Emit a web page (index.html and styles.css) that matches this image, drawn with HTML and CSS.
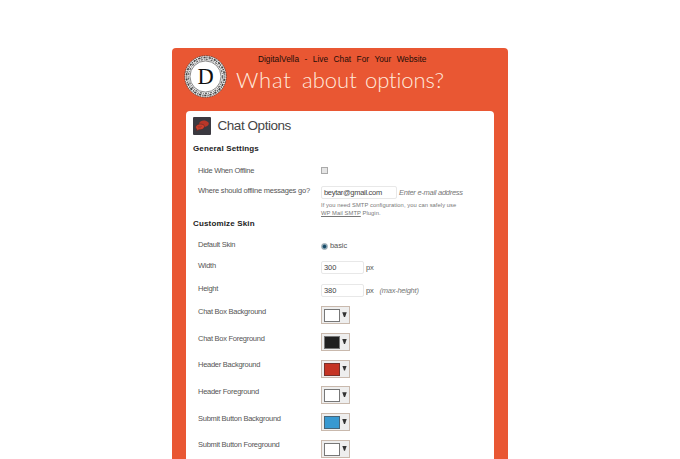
FILE: index.html
```html
<!DOCTYPE html>
<html lang="en">
<head>
<meta charset="utf-8">
<title>DigitalVella - Live Chat For Your Website</title>
<link rel="stylesheet" href="styles.css">
</head>
<body>
<main class="panel">
  <header class="banner">
    <svg class="logo" viewBox="0 0 44 44" aria-hidden="true">
      <circle cx="22" cy="22" r="21.2" fill="#eee" stroke="#393939" stroke-width=".8" stroke-dasharray="1.7 .8"/>
      <circle cx="22" cy="22" r="19.4" fill="none" stroke="#444" stroke-width="1.7" stroke-dasharray="1.1 1.2 2.3 .8"/>
      <circle cx="22" cy="22" r="17.4" fill="none" stroke="#666" stroke-width="1.3" stroke-dasharray="2.2 1 .8 1.1"/>
      <circle cx="22" cy="22" r="15.9" fill="#fff" stroke="#555" stroke-width=".7"/>
      <text class="logo-letter" x="22" y="29.6" text-anchor="middle">D</text>
    </svg>
    <div class="titles">
      <div class="site">DigitalVella - Live Chat For Your Website</div>
      <div class="question"><span class="w1">What</span><span class="w2">about</span><span class="w3">options?</span></div>
    </div>
  </header>
  <section class="card">
    <h1 class="heading">
      <svg class="chat-icon" viewBox="0 0 18 18" aria-hidden="true">
        <rect width="18" height="18" rx="1" fill="#3b3940"/>
        <path d="M6 6.400C7 3.800 10 2.900 13.200 3.900c3 1 3.400 3.300 1.300 4.900-1.300 1-2.800 1.300-4.500 1.200z" fill="#b93628"/>
        <path d="M3.500 14l.5-1.700C1.900 11.200 2.200 8.300 5.200 7.400c3.400-.9 6.600.3 6.300 2.400-.3 2.200-3.200 3.100-5.500 2.900z" fill="#cd3e2b" stroke="#50282a" stroke-width=".6"/>
        <path d="M4.500 9.400h4.500M5 10.700h3" stroke="#8d3029" stroke-width=".5"/>
      </svg>
      <span>Chat Options</span>
    </h1>
    <h2 class="section">General Settings</h2>
    <div class="row hide"><label>Hide When Offline</label><span class="check"></span></div>
    <div class="row mail"><label class="long">Where should offline messages go?</label>
      <div>
        <div class="line"><span class="field email">beytar@gmail.com</span><em class="hint">Enter e-mail address</em></div>
        <p class="note">If you need SMTP configuration, you can safely use<br><u>WP Mail SMTP</u> Plugin.</p>
      </div>
    </div>
    <h2 class="section">Customize Skin</h2>
    <div class="row default"><label>Default Skin</label><div class="line radio-line"><span class="radio"></span><span class="basic">basic</span></div></div>
    <div class="row size"><label>Width</label><div class="line"><span class="field">300</span><span class="unit">px</span></div></div>
    <div class="row size"><label>Height</label><div class="line"><span class="field">380</span><span class="unit">px</span><em class="max">(max-height)</em></div></div>
    <div class="row color"><label>Chat Box Background</label><span class="picker"><i class="swatch"></i><i class="arrow"></i></span></div>
    <div class="row color"><label>Chat Box Foreground</label><span class="picker"><i class="swatch black"></i><i class="arrow"></i></span></div>
    <div class="row color"><label>Header Background</label><span class="picker"><i class="swatch red"></i><i class="arrow"></i></span></div>
    <div class="row color"><label>Header Foreground</label><span class="picker"><i class="swatch"></i><i class="arrow"></i></span></div>
    <div class="row color"><label>Submit Button Background</label><span class="picker"><i class="swatch blue"></i><i class="arrow"></i></span></div>
    <div class="row color"><label>Submit Button Foreground</label><span class="picker"><i class="swatch"></i><i class="arrow"></i></span></div>
  </section>
</main>
</body>
</html>
```
FILE: styles.css
```css
* { box-sizing: border-box; }
html, body { height: 100%; }
body {
  margin: 0;
  padding-top: 48px;
  overflow: hidden;
  background: #fff;
  font-family: "Liberation Sans", Arial, sans-serif;
  color: #555;
}
.panel {
  width: 336px;
  height: 411px;
  margin-left: 172px;
  padding: 0 14px;
  background: #e95733;
  border-radius: 4px 4px 0 0;
  overflow: hidden;
}
.banner { display: flex; height: 63px; padding-top: 7px; }
.logo { width: 43px; height: 43px; margin-left: -2px; flex: none; }
.logo-letter { font: 23px "Liberation Serif", serif; fill: #111; }
.titles { padding-left: 9px; }
.site {
  height: 10px;
  margin-left: 22px;
  font-size: 8.3px;
  line-height: 9px;
  letter-spacing: 0;
  word-spacing: 3.2px;
  color: #1c0d08;
  white-space: nowrap;
}
.question {
  display: flex;
  font: 300 22px/30px Lato, sans-serif;
  color: #ffe9dc;
  white-space: nowrap;
}
.w1 { width: 66px; letter-spacing: .8px; }
.w2 { width: 63px; letter-spacing: 0; }
.w3 { letter-spacing: -.1px; }
.card {
  width: 308px;
  height: 360px;
  padding: 6px 7px 0;
  background: #fff;
  border-radius: 4px 4px 0 0;
}
.heading {
  display: flex;
  gap: 6.5px;
  height: 26px;
  margin: 0;
  font-size: 13.5px;
  font-weight: 400;
  line-height: 18px;
  letter-spacing: -.45px;
  color: #464646;
}
.chat-icon { width: 18px; height: 18px; }
.section {
  margin: 0;
  height: 22px;
  font-size: 8px;
  line-height: 12px;
  letter-spacing: .15px;
  color: #222;
}
.row {
  display: grid;
  grid-template-columns: 123px 1fr;
  align-items: start;
  padding-left: 5px;
  font-size: 7.5px;
  line-height: 10px;
}
.row label { white-space: nowrap; letter-spacing: -.27px; }
.row .long { letter-spacing: -.22px; }
.hide { height: 21px; padding-top: 1px; }
.check {
  width: 7px;
  height: 7px;
  margin-top: 1px;
  border: 1px solid #aaa;
  background: #e5e5e5;
}
.mail { height: 32px; }
.line { display: flex; align-items: center; }
.mail .line { height: 13px; }
.field {
  width: 43px;
  height: 13px;
  padding-left: 2px;
  border: 1px solid #e8e8e8;
  border-radius: 2px;
  font-size: 7.5px;
  line-height: 12px;
  letter-spacing: -.1px;
  color: #444;
}
.email { width: 76px; letter-spacing: -.3px; }
.hint { margin-left: 2px; letter-spacing: -.27px; color: #777; white-space: nowrap; }
.note {
  margin: 3px 0 0;
  font-size: 5.8px;
  line-height: 7.5px;
  letter-spacing: .06px;
  color: #777;
  white-space: nowrap;
}
.default { height: 21px; }
.radio-line { height: 12px; }
.radio {
  width: 7px;
  height: 7px;
  border: 1px solid #9ba8b0;
  border-radius: 50%;
  background: radial-gradient(circle, #164967 0 35%, #8eabb9 65%);
}
.basic { margin-left: 2px; letter-spacing: -.08px; }
.size { height: 23px; }
.size .line { height: 13px; }
.unit { margin-left: 2px; letter-spacing: -.2px; }
.max { margin-left: 6px; letter-spacing: -.25px; color: #777; }
.color { height: 26.7px; }
.picker {
  display: flex;
  width: 29px;
  height: 18px;
  padding: 2px;
  margin-top: -.8px;
  border: 1px solid #c9b9ad;
  background: #eee;
}
.swatch { width: 16px; height: 13px; border: 1px solid #777; background: #fff; }
.black { background: #202020; }
.red { background: #c53424; border-color: #783029; }
.blue { background: #3899d1; border-color: #476578; }
.arrow {
  width: 5px;
  height: 5px;
  margin: 3px 0 0 2px;
  background: #333;
  clip-path: polygon(5% 0, 95% 0, 60% 100%, 40% 100%);
}
```
